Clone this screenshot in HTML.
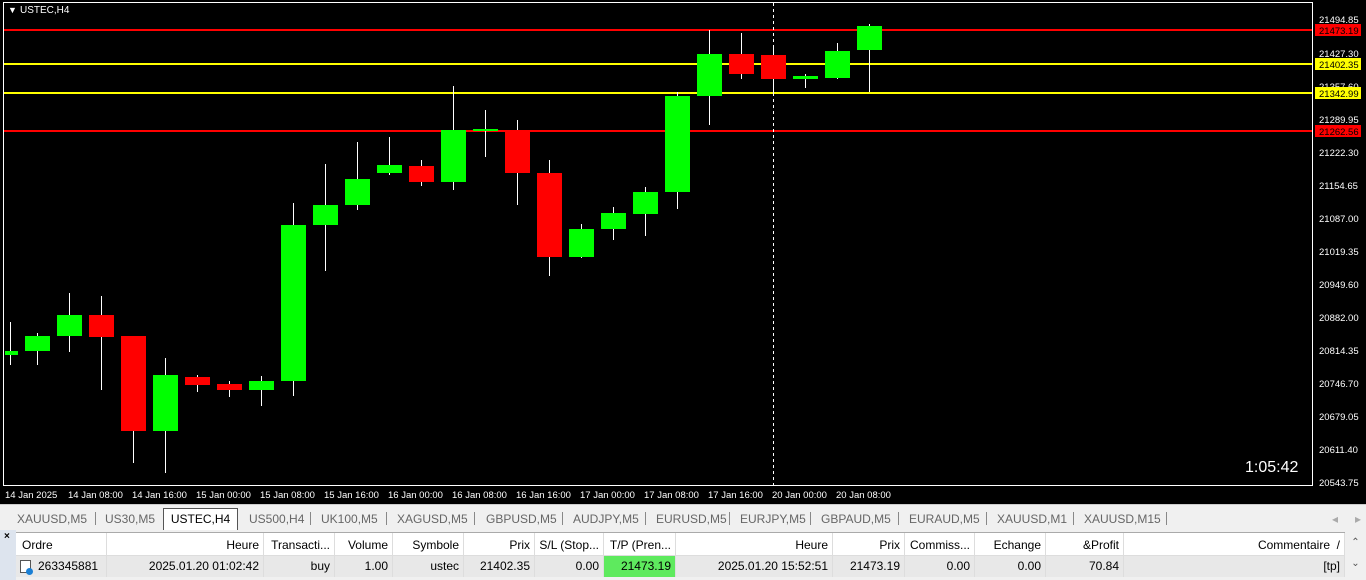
<!DOCTYPE html>
<html><head><meta charset="utf-8"><style>
*{margin:0;padding:0;box-sizing:border-box}
body{width:1366px;height:580px;overflow:hidden;background:#f0f0f0;font-family:"Liberation Sans",sans-serif;position:relative}
#chart{position:absolute;left:0;top:0;width:1366px;height:504px;background:#000}
.tabs{position:absolute;top:504px;left:0;width:1366px;height:25px;background:#f0f0f0;border-top:1px solid #ccc;font-size:12px;color:#666}
.tab{position:absolute;top:5px;height:18px;line-height:18px}
.sep{position:absolute;top:7px;width:1px;height:13px;background:#888}
.act{position:absolute;left:163px;top:3px;width:75px;height:22px;background:#fff;border:1px solid #555;border-bottom:none;color:#000;text-align:center;line-height:20px}
.tbl{position:absolute;top:532px;left:16px;width:1350px;height:48px;font-size:12px;color:#000}
.row{position:absolute;left:0;height:24px;width:1329px}
.c{position:absolute;top:0;height:24px;line-height:24px;padding:0 4px;border-right:1px solid #ddd;white-space:nowrap;overflow:hidden;text-align:right}
.hdr{top:0;background:#fff;border-top:1px solid #aaa;border-bottom:1px solid #ddd}
.dat{top:24px;background:#e8e8e8;height:21px}
.dat .c{height:21px;line-height:21px}
</style></head><body>
<div id="chart">
<svg width="1366" height="504" font-family="Liberation Sans, sans-serif" font-size="10" fill="#fff">
<rect x="3.5" y="2.5" width="1309" height="483" fill="none" stroke="#fff"/>
<text x="8" y="13" font-size="9">▼</text><text x="20" y="13" font-size="10">USTEC,H4</text>
<line x1="4" y1="30" x2="1312" y2="30" stroke="#f00" stroke-width="2"/>
<line x1="4" y1="64" x2="1312" y2="64" stroke="#ff0" stroke-width="2"/>
<line x1="4" y1="93" x2="1312" y2="93" stroke="#ff0" stroke-width="2"/>
<line x1="4" y1="131" x2="1312" y2="131" stroke="#f00" stroke-width="2"/>
<line x1="773.5" y1="3" x2="773.5" y2="485" stroke="#fff" stroke-dasharray="3,3"/>
<g stroke="#fff" stroke-width="1">
<line x1="10.5" y1="322" x2="10.5" y2="365"/><line x1="37.5" y1="333" x2="37.5" y2="365"/><line x1="69.5" y1="293" x2="69.5" y2="352"/><line x1="101.5" y1="296" x2="101.5" y2="390"/><line x1="133.5" y1="336" x2="133.5" y2="463"/><line x1="165.5" y1="358" x2="165.5" y2="473"/><line x1="197.5" y1="375" x2="197.5" y2="392"/><line x1="229.5" y1="381" x2="229.5" y2="397"/><line x1="261.5" y1="376" x2="261.5" y2="406"/><line x1="293.5" y1="203" x2="293.5" y2="396"/><line x1="325.5" y1="164" x2="325.5" y2="271"/><line x1="357.5" y1="142" x2="357.5" y2="210"/><line x1="389.5" y1="137" x2="389.5" y2="175"/><line x1="421.5" y1="160" x2="421.5" y2="186"/><line x1="453.5" y1="86" x2="453.5" y2="190"/><line x1="485.5" y1="110" x2="485.5" y2="157"/><line x1="517.5" y1="120" x2="517.5" y2="205"/><line x1="549.5" y1="160" x2="549.5" y2="276"/><line x1="581.5" y1="224" x2="581.5" y2="258"/><line x1="613.5" y1="207" x2="613.5" y2="240"/><line x1="645.5" y1="187" x2="645.5" y2="236"/><line x1="677.5" y1="92" x2="677.5" y2="209"/><line x1="709.5" y1="30" x2="709.5" y2="125"/><line x1="741.5" y1="33" x2="741.5" y2="79"/><line x1="773.5" y1="46" x2="773.5" y2="96"/><line x1="805.5" y1="74" x2="805.5" y2="88"/><line x1="837.5" y1="43" x2="837.5" y2="79"/><line x1="869.5" y1="24" x2="869.5" y2="92"/>
</g>
<g fill="#0f0">
<rect x="5" y="351" width="13" height="4"/><rect x="25" y="336" width="25" height="15"/><rect x="57" y="315" width="25" height="21"/><rect x="153" y="375" width="25" height="56"/><rect x="249" y="381" width="25" height="9"/><rect x="281" y="225" width="25" height="156"/><rect x="313" y="205" width="25" height="20"/><rect x="345" y="179" width="25" height="26"/><rect x="377" y="165" width="25" height="8"/><rect x="441" y="130" width="25" height="52"/><rect x="473" y="129" width="25" height="2"/><rect x="569" y="229" width="25" height="28"/><rect x="601" y="213" width="25" height="16"/><rect x="633" y="192" width="25" height="22"/><rect x="665" y="96" width="25" height="96"/><rect x="697" y="54" width="25" height="42"/><rect x="793" y="76" width="25" height="3"/><rect x="825" y="51" width="25" height="27"/><rect x="857" y="26" width="25" height="24"/>
</g>
<g fill="#f00">
<rect x="89" y="315" width="25" height="22"/><rect x="121" y="336" width="25" height="95"/><rect x="185" y="377" width="25" height="8"/><rect x="217" y="384" width="25" height="6"/><rect x="409" y="166" width="25" height="16"/><rect x="505" y="130" width="25" height="43"/><rect x="537" y="173" width="25" height="84"/><rect x="729" y="54" width="25" height="20"/><rect x="761" y="55" width="25" height="24"/>
</g>
<g font-size="9.5">
<text x="1319" y="23">21494.85</text><text x="1319" y="57">21427.30</text><text x="1319" y="90">21357.60</text><text x="1319" y="123">21289.95</text><text x="1319" y="156">21222.30</text><text x="1319" y="189">21154.65</text><text x="1319" y="222">21087.00</text><text x="1319" y="255">21019.35</text><text x="1319" y="288">20949.60</text><text x="1319" y="321">20882.00</text><text x="1319" y="354">20814.35</text><text x="1319" y="387">20746.70</text><text x="1319" y="420">20679.05</text><text x="1319" y="453">20611.40</text><text x="1319" y="486">20543.75</text>
</g>
<rect x="1315" y="24" width="46" height="12" fill="#f00"/><text x="1319" y="34" font-size="9.5" fill="#000">21473.19</text>
<rect x="1315" y="58" width="46" height="12" fill="#ff0"/><text x="1319" y="68" font-size="9.5" fill="#000">21402.35</text>
<rect x="1315" y="87" width="46" height="12" fill="#ff0"/><text x="1319" y="97" font-size="9.5" fill="#000">21342.99</text>
<rect x="1315" y="125" width="46" height="12" fill="#f00"/><text x="1319" y="135" font-size="9.5" fill="#000">21262.56</text>
<text x="1245" y="472" font-size="16">1:05:42</text>
<g font-size="9.5">
<text x="5" y="498">14 Jan 2025</text><text x="68" y="498">14 Jan 08:00</text><text x="132" y="498">14 Jan 16:00</text><text x="196" y="498">15 Jan 00:00</text><text x="260" y="498">15 Jan 08:00</text><text x="324" y="498">15 Jan 16:00</text><text x="388" y="498">16 Jan 00:00</text><text x="452" y="498">16 Jan 08:00</text><text x="516" y="498">16 Jan 16:00</text><text x="580" y="498">17 Jan 00:00</text><text x="644" y="498">17 Jan 08:00</text><text x="708" y="498">17 Jan 16:00</text><text x="772" y="498">20 Jan 00:00</text><text x="836" y="498">20 Jan 08:00</text>
</g>
</svg>
</div>
<div class="tabs">
<span class="tab" style="left:17px">XAUUSD,M5</span><span class="sep" style="left:95px"></span>
<span class="tab" style="left:105px">US30,M5</span>
<div class="act">USTEC,H4</div>
<span class="tab" style="left:249px">US500,H4</span><span class="sep" style="left:310px"></span>
<span class="tab" style="left:321px">UK100,M5</span><span class="sep" style="left:386px"></span>
<span class="tab" style="left:397px">XAGUSD,M5</span><span class="sep" style="left:474px"></span>
<span class="tab" style="left:486px">GBPUSD,M5</span><span class="sep" style="left:562px"></span>
<span class="tab" style="left:573px">AUDJPY,M5</span><span class="sep" style="left:645px"></span>
<span class="tab" style="left:656px">EURUSD,M5</span><span class="sep" style="left:729px"></span>
<span class="tab" style="left:740px">EURJPY,M5</span><span class="sep" style="left:810px"></span>
<span class="tab" style="left:821px">GBPAUD,M5</span><span class="sep" style="left:898px"></span>
<span class="tab" style="left:909px">EURAUD,M5</span><span class="sep" style="left:986px"></span>
<span class="tab" style="left:997px">XAUUSD,M1</span><span class="sep" style="left:1073px"></span>
<span class="tab" style="left:1084px">XAUUSD,M15</span><span class="sep" style="left:1166px"></span>
<span class="tab" style="left:1332px;color:#aaa">◂</span><span class="tab" style="left:1355px;color:#aaa">▸</span>
</div>
<div style="position:absolute;left:0;top:530px;width:16px;height:50px;background:#dde4ee;font-size:10px"><span style="position:absolute;left:4px;top:1px;font-weight:bold">×</span></div>
<div class="tbl">
<div class="row hdr">
<div class="c" style="left:0;width:91px;text-align:left;padding-left:6px">Ordre</div>
<div class="c" style="left:91px;width:157px">Heure</div>
<div class="c" style="left:248px;width:71px">Transacti...</div>
<div class="c" style="left:319px;width:58px">Volume</div>
<div class="c" style="left:377px;width:71px">Symbole</div>
<div class="c" style="left:448px;width:71px">Prix</div>
<div class="c" style="left:519px;width:69px">S/L (Stop...</div>
<div class="c" style="left:588px;width:72px">T/P (Pren...</div>
<div class="c" style="left:660px;width:157px">Heure</div>
<div class="c" style="left:817px;width:72px">Prix</div>
<div class="c" style="left:889px;width:70px">Commiss...</div>
<div class="c" style="left:959px;width:71px">Echange</div>
<div class="c" style="left:1030px;width:78px">&amp;Profit</div>
<div class="c" style="left:1108px;width:221px">Commentaire &nbsp;/</div>
</div>
<div class="row dat">
<div class="c" style="left:0;width:91px;text-align:left;padding-left:22px">263345881</div>
<div class="c" style="left:91px;width:157px">2025.01.20 01:02:42</div>
<div class="c" style="left:248px;width:71px">buy</div>
<div class="c" style="left:319px;width:58px">1.00</div>
<div class="c" style="left:377px;width:71px">ustec</div>
<div class="c" style="left:448px;width:71px">21402.35</div>
<div class="c" style="left:519px;width:69px">0.00</div>
<div class="c" style="left:588px;width:72px;background:#5eea5e">21473.19</div>
<div class="c" style="left:660px;width:157px">2025.01.20 15:52:51</div>
<div class="c" style="left:817px;width:72px">21473.19</div>
<div class="c" style="left:889px;width:70px">0.00</div>
<div class="c" style="left:959px;width:71px">0.00</div>
<div class="c" style="left:1030px;width:78px">70.84</div>
<div class="c" style="left:1108px;width:221px">[tp]</div>
</div>
<div style="position:absolute;left:4px;top:28px;width:11px;height:13px;border:1px solid #555;background:#fff"></div>
<div style="position:absolute;left:10px;top:36px;width:7px;height:7px;border-radius:50%;background:#1a7fd4"></div>
<div style="position:absolute;left:1329px;top:0;width:21px;height:48px;background:#f0f0f0;font-size:10px;color:#555;text-align:center"><div style="margin-top:5px">⌃</div><div style="margin-top:10px">⌄</div></div>
</div>
</body></html>
